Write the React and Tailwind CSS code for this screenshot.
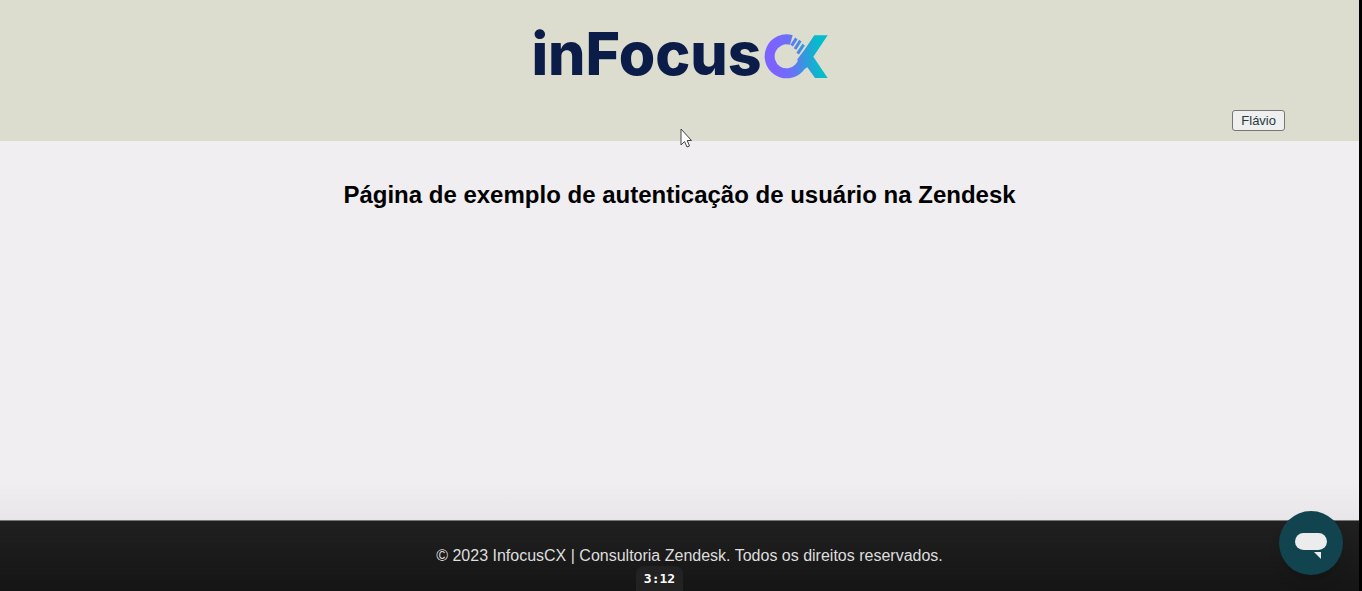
function BrandMark() {
  return (
    <svg viewBox="0 0 192 135" className="mt-1 h-[45px] w-16" aria-hidden="true">
      <defs>
        <linearGradient id="brand" gradientUnits="userSpaceOnUse" x1="30" y1="74" x2="166" y2="60">
          <stop offset="0" stopColor="#7c62ff" />
          <stop offset="0.35" stopColor="#6c70f8" />
          <stop offset="0.7" stopColor="#2f9cdb" />
          <stop offset="1" stopColor="#04bccb" />
        </linearGradient>
      </defs>
      <g fill="none" stroke="url(#brand)">
        <path d="M82 18 A51 51 0 1 0 106 101 L128 70" strokeWidth="30" />
        <path d="M83 35 L97 13 M93 45 L109 20 M101 59 L119 32" strokeWidth="9" />
      </g>
      <path d="M151 4 H191 L148 68 L191 132 H153 L130 100 L108 114 L100 76 L121 48 Z" fill="url(#brand)" />
    </svg>
  );
}

function Header() {
  return (
    <header className="bg-[#dcddcf] px-[74px] pt-[22px] pb-[10px]">
      <div className="flex h-16 items-center justify-center gap-0.5">
        <span className="font-['Inter',sans-serif] text-[59px] leading-[64px] font-extrabold text-[#0b1c48]">
          inFocus
        </span>
        <BrandMark />
      </div>
      <div className="mt-6 flex justify-end">
        <button
          type="button"
          className="h-[21px] rounded-[3px] border border-[#767676] bg-[#efefef] px-2 text-[13px] leading-[18px] text-[#263840]"
        >
          Flávio
        </button>
      </div>
    </header>
  );
}

function ChatButton() {
  return (
    <button
      type="button"
      aria-label="Chat"
      className="absolute right-4 bottom-4 flex size-16 items-center justify-center rounded-full bg-[#11444f] shadow-lg"
    >
      <svg viewBox="0 0 32 26" className="mt-1.5 h-[26px] w-8" fill="#ececec" aria-hidden="true">
        <rect width="32" height="17" rx="8.5" />
        <path d="M19 19 H26 V26 Z" />
      </svg>
    </button>
  );
}

function Cursor() {
  return (
    <svg
      viewBox="0 0 12 20"
      className="absolute top-32 left-1/2 h-5 w-3"
      fill="#fff"
      stroke="#444"
      aria-hidden="true"
    >
      <path d="M1 1 V17 L4.5 13.5 L7 19 L9.5 18 L7.2 12.5 H11.5 Z" />
    </svg>
  );
}

export default function App() {
  return (
    <div className="relative flex min-h-screen flex-col border-r-3 border-black bg-[#f0eef1] font-['Liberation_Sans',Arial,sans-serif]">
      <Header />
      <main className="flex-1 bg-linear-to-t from-[#e8e6e9] to-[#f0eef1] to-10% px-5 pt-10">
        <h1 className="text-center text-2xl leading-7 font-bold text-black">
          Página de exemplo de autenticação de usuário na Zendesk
        </h1>
      </main>
      <footer className="border-t border-[#777] bg-linear-to-b from-[#202020] to-[#151515] pt-[23px] pb-[23px] pl-5">
        <p className="text-center text-base leading-6 text-[#dedede]">
          © 2023 InfocusCX | Consultoria Zendesk. Todos os direitos reservados.
        </p>
      </footer>
      <Cursor />
      <ChatButton />
      <div className="absolute inset-x-0 bottom-0 flex justify-center pr-10">
        <time className="rounded-t-lg bg-[#222] px-2 pt-1 pb-1 font-['DejaVu_Sans_Mono',monospace] text-[13px] leading-[17px] font-bold text-white">
          3:12
        </time>
      </div>
    </div>
  );
}
